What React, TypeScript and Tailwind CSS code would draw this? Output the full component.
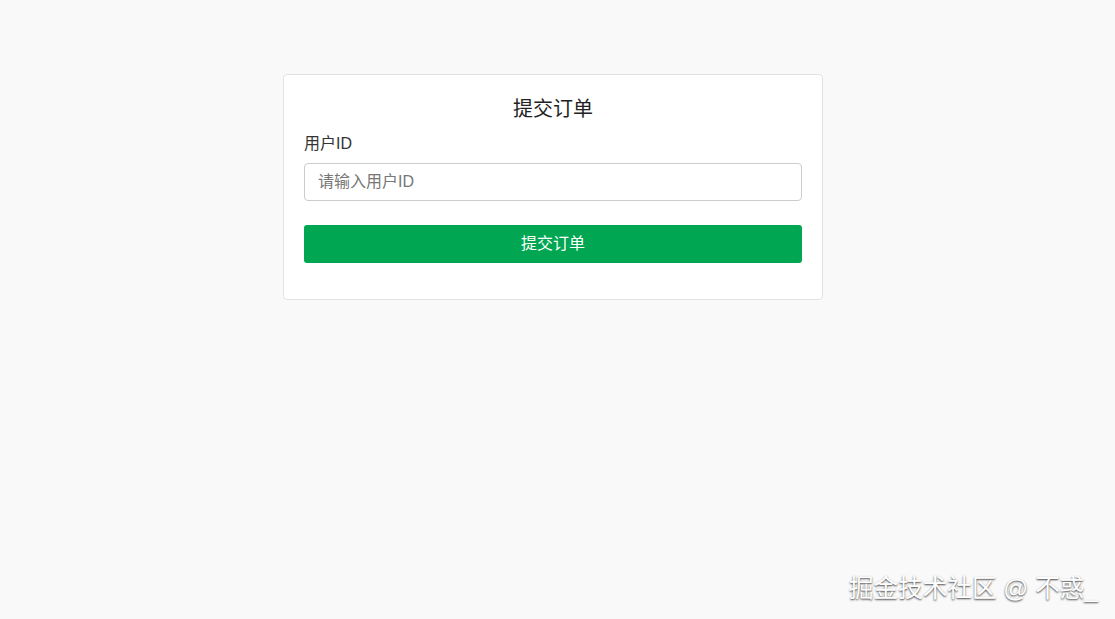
export default function App() {
  return (
    <div
      className="relative flex min-h-[619px] w-full justify-center bg-[#f9f9f9] pr-[9px] pt-[74px]"
      style={{ fontFamily: '"Liberation Sans", "Noto Sans CJK SC", sans-serif' }}
    >
      <div className="h-[226px] w-[540px] rounded-[4px] border border-[#e3e3e3] bg-white px-5 pt-5">
        <h2 className="text-center text-[20px] leading-[28px] text-[#222]">提交订单</h2>
        <label className="mt-[11px] block text-[16px] leading-[20px] text-[#333]">用户ID</label>
        <input
          placeholder="请输入用户ID"
          className="mt-[9px] block h-[38px] w-full rounded-[4px] border border-[#ccc] px-[13px] text-[16px] text-[#333] placeholder:text-[#777] focus:outline-none"
        />
        <button className="mt-6 block h-[38px] w-full rounded-[3px] bg-[#00a651] text-[16px] text-white">
          提交订单
        </button>
      </div>
      <div className="absolute bottom-[16px] right-[17px] text-[24.6px] leading-[28px] text-white [text-shadow:0_1px_2px_rgba(0,0,0,0.75)]">
        掘金技术社区 @ 不惑_
      </div>
    </div>
  );
}
